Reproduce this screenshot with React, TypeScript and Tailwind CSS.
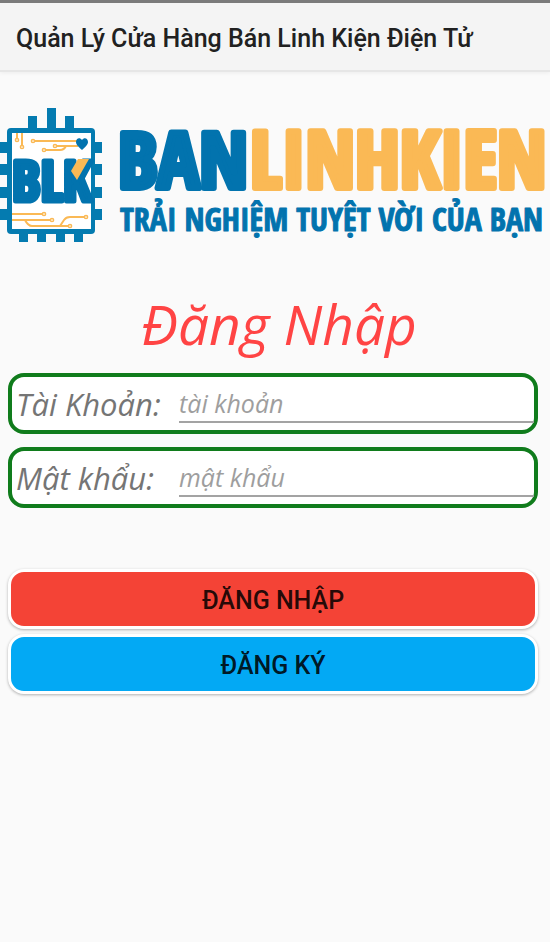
import type { ReactNode } from "react";

const BLUE = "#0273ae";
const AMBER = "#fab955";

function Logo() {
  return (
    <svg viewBox="0 0 550 150" className="block w-full" role="img" aria-label="BANLINHKIEN - Trải nghiệm tuyệt vời của bạn">
      <g fill="#047bb0">
        <path d="M28 18h9v12h-9zM47 10h9v20h-9zM65 18h9v12h-9z" />
        <path d="M19 132h9v12h-9zM37 132h9v12h-9zM56 132h9v12h-9zM74 132h9v12h-9z" />
        <path d="M0 44h10v11H0zM0 66h10v11H0zM0 89h10v11H0zM0 111h10v11H0z" />
        <path d="M92 44h10v11H92zM92 66h10v11H92zM92 89h10v11H92zM92 111h10v11H92z" />
        <rect x="7" y="30" width="88" height="106" rx="4" />
      </g>
      <rect x="12" y="35" width="79" height="96" fill="#fff" />
      <g fill="none" stroke={AMBER} strokeWidth="2" transform="translate(0 4)">
        <path d="M17 31v6M22 31v12M35 39h43M57 44h21M46 48h14q4 0 6-4" />
        <path d="M12 112h30M12 118h38M25 118q3 6 7 6h37M60 124l4-6q2-3 6-3h15" />
        <g fill="#fff" strokeWidth="1.5">
          <circle cx="17" cy="38" r="1.6" /><circle cx="22" cy="45" r="1.6" />
          <circle cx="33" cy="39" r="1.6" /><circle cx="55" cy="44" r="1.6" />
          <circle cx="44" cy="48" r="1.6" /><circle cx="44" cy="112" r="1.6" />
          <circle cx="52" cy="118" r="1.6" /><circle cx="70" cy="124" r="1.6" />
          <circle cx="86" cy="115" r="1.6" />
        </g>
      </g>
      <path d="M82 52c-3-3-6-5-6-8 0-4 4-5 6-2 2-3 6-2 6 2 0 3-3 5-6 8z" fill={BLUE} />
      <g className="font-['Open_Sans_Condensed','Roboto_Condensed',sans-serif] font-bold" fill={BLUE} stroke={BLUE} strokeLinejoin="round">
        <text x="12" y="103" fontSize="56" strokeWidth="5">BLK</text>
        <text x="118" y="90" fontSize="78" strokeWidth="6">BAN</text>
        <text x="250" y="90" fontSize="79" strokeWidth="6" fill={AMBER} stroke={AMBER}>LINHKIEN</text>
        <text x="120" y="133" fontSize="32" strokeWidth="1">TRẢI NGHIỆM TUYỆT VỜI CỦA BẠN</text>
      </g>
      <path d="M78 61h11L77 82l-6-9z" fill={AMBER} />
    </svg>
  );
}

function Field({ id, label, hint, type }: { id: string; label: string; hint: string; type: string }) {
  return (
    <div className="flex h-[61px] items-start rounded-2xl border-4 border-[#107c1c] bg-white pl-1">
      <label htmlFor={id} className="w-[163px] shrink-0 pt-1.5 text-[31px] leading-[42px] text-[#757575]">
        {label}
      </label>
      <input
        id={id}
        type={type}
        placeholder={hint}
        className="h-[46px] min-w-0 flex-1 border-b-2 border-[#a3a3a3] bg-transparent pt-2 text-[25px] italic text-[#212121] outline-none placeholder:text-[#9e9e9e]"
      />
    </div>
  );
}

function Action({ className, children }: { className: string; children: ReactNode }) {
  return (
    <button
      type="submit"
      className={`h-[60px] w-full rounded-2xl border-3 border-white pt-1 font-['Roboto',sans-serif] text-[25px] font-medium text-black/87 shadow-[0_1px_3px_rgba(0,0,0,0.3)] ${className}`}
    >
      {children}
    </button>
  );
}

export default function App() {
  return (
    <div className="min-h-screen bg-[#fafafa]">
      <header className="flex h-[72px] items-center border-t-3 border-b-2 border-t-[#7b7b7b] border-b-[#e6e6e6] bg-[#f4f4f4] px-4 pt-1 shadow-[0_1px_4px_rgba(0,0,0,0.06)]">
        <h1 className="font-['Roboto',sans-serif] text-[25px] font-medium whitespace-nowrap text-[#212121]">
          Quản Lý Cửa Hàng Bán Linh Kiện Điện Tử
        </h1>
      </header>
      <main className="pt-[26px]">
        <Logo />
        <form
          className="px-2 pr-3 pt-9 font-['Open_Sans','Noto_Sans',sans-serif] italic"
          onSubmit={(event) => event.preventDefault()}
        >
          <h2 className="pl-3 text-center text-[55px] leading-[80px] text-[#ff4444]">Đăng Nhập</h2>
          <div className="flex flex-col gap-[13px] pt-[9px]">
            <Field id="account" label="Tài Khoản:" hint="tài khoản" type="text" />
            <Field id="password" label="Mật khẩu:" hint="mật khẩu" type="password" />
          </div>
          <div className="flex flex-col gap-[5px] pt-[61px] not-italic">
            <Action className="bg-[#f44336]">ĐĂNG NHẬP</Action>
            <Action className="bg-[#03a9f4]">ĐĂNG KÝ</Action>
          </div>
        </form>
      </main>
    </div>
  );
}
